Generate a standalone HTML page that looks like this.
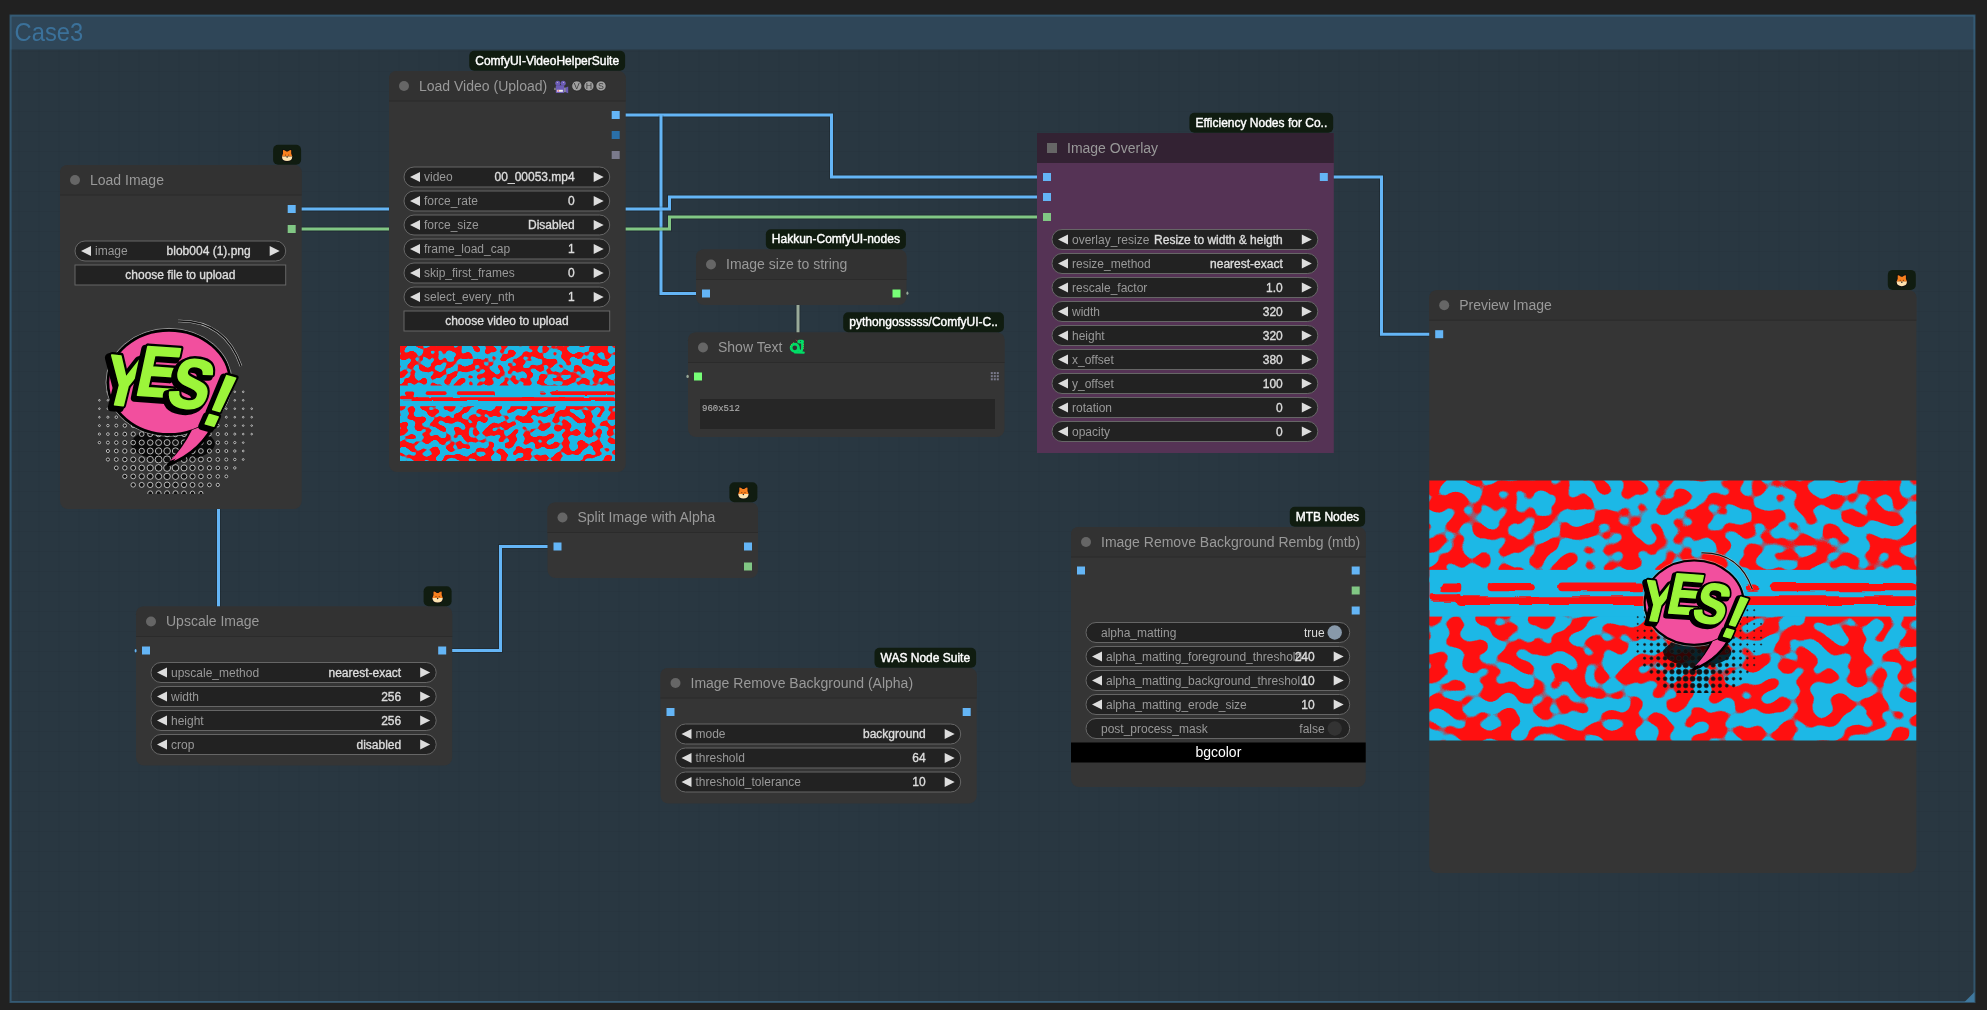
<!DOCTYPE html>
<html><head><meta charset="utf-8"><style>
html,body{margin:0;padding:0;background:#212121;width:1987px;height:1010px;overflow:hidden}
svg{display:block;font-family:"Liberation Sans", sans-serif;will-change:transform}
</style></head><body>
<svg width="1987" height="1010" viewBox="0 0 1987 1010">
<defs>
<pattern id="grid" x="18.5" y="11" width="20" height="20" patternUnits="userSpaceOnUse">
<rect x="0" y="0" width="20" height="1" fill="rgba(0,0,0,0.03)"/>
<rect x="0" y="0" width="1" height="20" fill="rgba(0,0,0,0.03)"/>
</pattern>
<filter id="blob" x="0" y="0" width="1" height="1" color-interpolation-filters="sRGB">
<feTurbulence type="fractalNoise" baseFrequency="0.029 0.035" numOctaves="1" seed="11"/>
<feComponentTransfer><feFuncR type="linear" slope="20" intercept="-9.5"/></feComponentTransfer>
<feColorMatrix type="matrix" values="0.890 0 0 0 0.110  -0.659 0 0 0 0.722  -0.839 0 0 0 0.902  0 0 0 0 1"/>
</filter>
<filter id="wave" x="-5%" y="-50%" width="110%" height="200%" color-interpolation-filters="sRGB">
<feTurbulence type="fractalNoise" baseFrequency="0.015 0.08" numOctaves="1" seed="3" result="n"/>
<feDisplacementMap in="SourceGraphic" in2="n" scale="12" xChannelSelector="R" yChannelSelector="G"/>
</filter>
<symbol id="blobimg" viewBox="0 0 960 512" preserveAspectRatio="none">
<rect x="0" y="0" width="960" height="512" filter="url(#blob)"/>
<rect x="0" y="176" width="960" height="92" fill="#1cb8e6"/>
<g fill="#ff1010" filter="url(#wave)">
<rect x="22" y="203" width="41" height="15" rx="7"/><rect x="115" y="202" width="93" height="16" rx="8"/><rect x="254" y="201" width="170" height="17" rx="8"/><rect x="626" y="203" width="25" height="14" rx="7"/><rect x="673" y="202" width="287" height="16" rx="8"/>
<rect x="52" y="228" width="908" height="17" rx="8"/><rect x="0" y="222" width="62" height="15" rx="7"/>
</g>
</symbol>
<symbol id="fox" viewBox="0 0 14 14" width="14" height="14">
<path d="M1.5,8 L2.6,4.8 L2.6,1 Q4.4,0.4 6.3,2.4 L7.7,2.4 Q9.6,0.4 11.4,1 L11.4,4.8 L12.5,8 Q12.2,12.8 7,12.9 Q1.8,12.8 1.5,8 Z" fill="#111" stroke="#111" stroke-width="1.0" stroke-linejoin="round"/>
<path d="M1.8,7.9 L2.9,4.8 L2.9,1.5 Q4.4,1 6.2,2.9 L7.8,2.9 Q9.6,1 11.1,1.5 L11.1,4.8 L12.2,7.9 Z" fill="#f7801f"/>
<path d="M1.8,7.7 L12.2,7.7 Q11.9,12.3 7,12.4 Q2.1,12.3 1.8,7.7 Z" fill="#fde3b0"/>
<circle cx="5.4" cy="6.4" r="0.6" fill="#7a3c10"/><circle cx="8.6" cy="6.4" r="0.6" fill="#7a3c10"/>
<circle cx="7" cy="8.3" r="0.75" fill="#222"/>
</symbol>
<symbol id="yes" viewBox="0 0 200 200">
<ellipse cx="93" cy="150" rx="42" ry="17" fill="#000" stroke="none" opacity="0.8"/>
<g fill="#111" stroke-width="0.8"><circle cx="27.9" cy="97.8" r="0.80"/><circle cx="36.3" cy="97.8" r="0.80"/><circle cx="44.8" cy="97.8" r="0.80"/><circle cx="53.2" cy="97.8" r="0.89"/><circle cx="61.7" cy="97.8" r="1.01"/><circle cx="70.2" cy="97.8" r="1.09"/><circle cx="78.6" cy="97.8" r="1.14"/><circle cx="87.1" cy="97.8" r="1.15"/><circle cx="95.5" cy="97.8" r="1.13"/><circle cx="104.0" cy="97.8" r="1.07"/><circle cx="112.5" cy="97.8" r="0.98"/><circle cx="120.9" cy="97.8" r="0.86"/><circle cx="129.4" cy="97.8" r="0.80"/><circle cx="137.8" cy="97.8" r="0.80"/><circle cx="146.3" cy="97.8" r="0.80"/><circle cx="154.8" cy="97.8" r="0.80"/><circle cx="163.2" cy="97.8" r="0.80"/><circle cx="19.4" cy="106.3" r="0.80"/><circle cx="27.9" cy="106.3" r="0.80"/><circle cx="36.3" cy="106.3" r="0.83"/><circle cx="44.8" cy="106.3" r="1.01"/><circle cx="53.2" cy="106.3" r="1.17"/><circle cx="61.7" cy="106.3" r="1.29"/><circle cx="70.2" cy="106.3" r="1.39"/><circle cx="78.6" cy="106.3" r="1.45"/><circle cx="87.1" cy="106.3" r="1.46"/><circle cx="95.5" cy="106.3" r="1.44"/><circle cx="104.0" cy="106.3" r="1.37"/><circle cx="112.5" cy="106.3" r="1.27"/><circle cx="120.9" cy="106.3" r="1.13"/><circle cx="129.4" cy="106.3" r="0.96"/><circle cx="137.8" cy="106.3" r="0.80"/><circle cx="146.3" cy="106.3" r="0.80"/><circle cx="154.8" cy="106.3" r="0.80"/><circle cx="163.2" cy="106.3" r="0.80"/><circle cx="19.4" cy="114.7" r="0.80"/><circle cx="27.9" cy="114.7" r="0.84"/><circle cx="36.3" cy="114.7" r="1.06"/><circle cx="44.8" cy="114.7" r="1.26"/><circle cx="53.2" cy="114.7" r="1.43"/><circle cx="61.7" cy="114.7" r="1.58"/><circle cx="70.2" cy="114.7" r="1.69"/><circle cx="78.6" cy="114.7" r="1.75"/><circle cx="87.1" cy="114.7" r="1.77"/><circle cx="95.5" cy="114.7" r="1.74"/><circle cx="104.0" cy="114.7" r="1.66"/><circle cx="112.5" cy="114.7" r="1.54"/><circle cx="120.9" cy="114.7" r="1.39"/><circle cx="129.4" cy="114.7" r="1.21"/><circle cx="137.8" cy="114.7" r="1.01"/><circle cx="146.3" cy="114.7" r="0.80"/><circle cx="154.8" cy="114.7" r="0.80"/><circle cx="163.2" cy="114.7" r="0.80"/><circle cx="171.7" cy="114.7" r="0.80"/><circle cx="19.4" cy="123.2" r="0.80"/><circle cx="27.9" cy="123.2" r="1.04"/><circle cx="36.3" cy="123.2" r="1.27"/><circle cx="44.8" cy="123.2" r="1.49"/><circle cx="53.2" cy="123.2" r="1.69"/><circle cx="61.7" cy="123.2" r="1.85"/><circle cx="70.2" cy="123.2" r="1.98"/><circle cx="78.6" cy="123.2" r="2.05"/><circle cx="87.1" cy="123.2" r="2.07"/><circle cx="95.5" cy="123.2" r="2.04"/><circle cx="104.0" cy="123.2" r="1.95"/><circle cx="112.5" cy="123.2" r="1.81"/><circle cx="120.9" cy="123.2" r="1.64"/><circle cx="129.4" cy="123.2" r="1.44"/><circle cx="137.8" cy="123.2" r="1.22"/><circle cx="146.3" cy="123.2" r="0.98"/><circle cx="154.8" cy="123.2" r="0.80"/><circle cx="163.2" cy="123.2" r="0.80"/><circle cx="171.7" cy="123.2" r="0.80"/><circle cx="19.4" cy="131.6" r="0.95"/><circle cx="27.9" cy="131.6" r="1.21"/><circle cx="36.3" cy="131.6" r="1.47"/><circle cx="44.8" cy="131.6" r="1.71"/><circle cx="53.2" cy="131.6" r="1.93"/><circle cx="61.7" cy="131.6" r="2.11"/><circle cx="70.2" cy="131.6" r="2.26"/><circle cx="78.6" cy="131.6" r="2.36"/><circle cx="87.1" cy="131.6" r="2.38"/><circle cx="95.5" cy="131.6" r="2.34"/><circle cx="104.0" cy="131.6" r="2.23"/><circle cx="112.5" cy="131.6" r="2.07"/><circle cx="120.9" cy="131.6" r="1.87"/><circle cx="129.4" cy="131.6" r="1.65"/><circle cx="137.8" cy="131.6" r="1.40"/><circle cx="146.3" cy="131.6" r="1.15"/><circle cx="154.8" cy="131.6" r="0.88"/><circle cx="163.2" cy="131.6" r="0.80"/><circle cx="171.7" cy="131.6" r="0.80"/><circle cx="19.4" cy="140.1" r="1.08"/><circle cx="27.9" cy="140.1" r="1.36"/><circle cx="36.3" cy="140.1" r="1.63"/><circle cx="44.8" cy="140.1" r="1.90"/><circle cx="53.2" cy="140.1" r="2.14"/><circle cx="61.7" cy="140.1" r="2.36"/><circle cx="70.2" cy="140.1" r="2.54"/><circle cx="78.6" cy="140.1" r="2.65"/><circle cx="87.1" cy="140.1" r="2.69"/><circle cx="95.5" cy="140.1" r="2.63"/><circle cx="104.0" cy="140.1" r="2.50"/><circle cx="112.5" cy="140.1" r="2.31"/><circle cx="120.9" cy="140.1" r="2.08"/><circle cx="129.4" cy="140.1" r="1.83"/><circle cx="137.8" cy="140.1" r="1.57"/><circle cx="146.3" cy="140.1" r="1.29"/><circle cx="154.8" cy="140.1" r="1.01"/><circle cx="163.2" cy="140.1" r="0.80"/><circle cx="171.7" cy="140.1" r="0.80"/><circle cx="19.4" cy="148.6" r="1.19"/><circle cx="27.9" cy="148.6" r="1.48"/><circle cx="36.3" cy="148.6" r="1.77"/><circle cx="44.8" cy="148.6" r="2.05"/><circle cx="53.2" cy="148.6" r="2.32"/><circle cx="61.7" cy="148.6" r="2.57"/><circle cx="70.2" cy="148.6" r="2.79"/><circle cx="78.6" cy="148.6" r="2.95"/><circle cx="87.1" cy="148.6" r="2.99"/><circle cx="95.5" cy="148.6" r="2.92"/><circle cx="104.0" cy="148.6" r="2.74"/><circle cx="112.5" cy="148.6" r="2.51"/><circle cx="120.9" cy="148.6" r="2.25"/><circle cx="129.4" cy="148.6" r="1.98"/><circle cx="137.8" cy="148.6" r="1.69"/><circle cx="146.3" cy="148.6" r="1.40"/><circle cx="154.8" cy="148.6" r="1.11"/><circle cx="163.2" cy="148.6" r="0.81"/><circle cx="27.9" cy="157.0" r="1.56"/><circle cx="36.3" cy="157.0" r="1.86"/><circle cx="44.8" cy="157.0" r="2.15"/><circle cx="53.2" cy="157.0" r="2.45"/><circle cx="61.7" cy="157.0" r="2.73"/><circle cx="70.2" cy="157.0" r="3.00"/><circle cx="78.6" cy="157.0" r="3.22"/><circle cx="87.1" cy="157.0" r="3.30"/><circle cx="95.5" cy="157.0" r="3.17"/><circle cx="104.0" cy="157.0" r="2.94"/><circle cx="112.5" cy="157.0" r="2.66"/><circle cx="120.9" cy="157.0" r="2.37"/><circle cx="129.4" cy="157.0" r="2.08"/><circle cx="137.8" cy="157.0" r="1.78"/><circle cx="146.3" cy="157.0" r="1.48"/><circle cx="154.8" cy="157.0" r="1.18"/><circle cx="163.2" cy="157.0" r="0.87"/><circle cx="27.9" cy="165.5" r="1.59"/><circle cx="36.3" cy="165.5" r="1.90"/><circle cx="44.8" cy="165.5" r="2.20"/><circle cx="53.2" cy="165.5" r="2.51"/><circle cx="61.7" cy="165.5" r="2.81"/><circle cx="70.2" cy="165.5" r="3.12"/><circle cx="78.6" cy="165.5" r="3.42"/><circle cx="87.1" cy="165.5" r="3.60"/><circle cx="95.5" cy="165.5" r="3.34"/><circle cx="104.0" cy="165.5" r="3.04"/><circle cx="112.5" cy="165.5" r="2.74"/><circle cx="120.9" cy="165.5" r="2.43"/><circle cx="129.4" cy="165.5" r="2.12"/><circle cx="137.8" cy="165.5" r="1.82"/><circle cx="146.3" cy="165.5" r="1.51"/><circle cx="154.8" cy="165.5" r="1.21"/><circle cx="163.2" cy="165.5" r="0.90"/><circle cx="36.3" cy="173.9" r="1.89"/><circle cx="44.8" cy="173.9" r="2.19"/><circle cx="53.2" cy="173.9" r="2.49"/><circle cx="61.7" cy="173.9" r="2.79"/><circle cx="70.2" cy="173.9" r="3.09"/><circle cx="78.6" cy="173.9" r="3.36"/><circle cx="87.1" cy="173.9" r="3.48"/><circle cx="95.5" cy="173.9" r="3.29"/><circle cx="104.0" cy="173.9" r="3.01"/><circle cx="112.5" cy="173.9" r="2.72"/><circle cx="120.9" cy="173.9" r="2.42"/><circle cx="129.4" cy="173.9" r="2.11"/><circle cx="137.8" cy="173.9" r="1.81"/><circle cx="146.3" cy="173.9" r="1.50"/><circle cx="154.8" cy="173.9" r="1.20"/><circle cx="44.8" cy="182.4" r="2.12"/><circle cx="53.2" cy="182.4" r="2.40"/><circle cx="61.7" cy="182.4" r="2.68"/><circle cx="70.2" cy="182.4" r="2.92"/><circle cx="78.6" cy="182.4" r="3.11"/><circle cx="87.1" cy="182.4" r="3.18"/><circle cx="95.5" cy="182.4" r="3.07"/><circle cx="104.0" cy="182.4" r="2.86"/><circle cx="112.5" cy="182.4" r="2.61"/><circle cx="120.9" cy="182.4" r="2.33"/><circle cx="129.4" cy="182.4" r="2.04"/><circle cx="137.8" cy="182.4" r="1.75"/><circle cx="146.3" cy="182.4" r="1.45"/><circle cx="53.2" cy="190.9" r="2.25"/><circle cx="61.7" cy="190.9" r="2.49"/><circle cx="70.2" cy="190.9" r="2.69"/><circle cx="78.6" cy="190.9" r="2.83"/><circle cx="87.1" cy="190.9" r="2.87"/><circle cx="95.5" cy="190.9" r="2.80"/><circle cx="104.0" cy="190.9" r="2.65"/><circle cx="112.5" cy="190.9" r="2.43"/><circle cx="120.9" cy="190.9" r="2.19"/><circle cx="129.4" cy="190.9" r="1.92"/><circle cx="137.8" cy="190.9" r="1.65"/><circle cx="70.2" cy="199.3" r="2.43"/><circle cx="78.6" cy="199.3" r="2.53"/><circle cx="87.1" cy="199.3" r="2.56"/><circle cx="95.5" cy="199.3" r="2.51"/><circle cx="104.0" cy="199.3" r="2.39"/><circle cx="112.5" cy="199.3" r="2.21"/><circle cx="120.9" cy="199.3" r="2.00"/></g>
<ellipse cx="89" cy="88.4" rx="63" ry="54" fill="none" stroke="#bbb" stroke-width="0.7"/>
<path d="M112,134 Q103,156 88,171 Q122,158 136,126 Z" fill="#f24f9e" stroke="#000" stroke-width="3" stroke-linejoin="round"/>
<ellipse cx="89" cy="88.4" rx="61" ry="52" fill="#f24f9e" stroke="#000" stroke-width="2.6"/>
<path d="M112,136 Q103,154 90,167 Q120,156 133,128 Z" fill="#f24f9e" stroke="none"/>
<path d="M98,27 Q145,26 161,72" fill="none" stroke="#bbb" stroke-width="2.6"/>
<path d="M98,27 Q145,26 161,72" fill="none" stroke="#111" stroke-width="1.5"/>
<g transform="translate(45 86) rotate(6) skewX(-8) scale(0.92 1.08)"><text x="-2.5" y="26.128" font-size="66" font-weight="bold" text-anchor="middle" fill="#000" stroke="#000" stroke-width="8" stroke-linejoin="round">Y</text><text x="0" y="23.628" font-size="66" font-weight="bold" text-anchor="middle" fill="#000" stroke="#000" stroke-width="6" stroke-linejoin="round">Y</text><text x="0" y="23.628" font-size="66" font-weight="bold" text-anchor="middle" fill="#9cf53a" stroke="#9cf53a" stroke-width="1.6" stroke-linejoin="round">Y</text></g>
<g transform="translate(79 77) rotate(4) skewX(-8) scale(0.92 1.08)"><text x="-2.5" y="26.128" font-size="66" font-weight="bold" text-anchor="middle" fill="#000" stroke="#000" stroke-width="8" stroke-linejoin="round">E</text><text x="0" y="23.628" font-size="66" font-weight="bold" text-anchor="middle" fill="#000" stroke="#000" stroke-width="6" stroke-linejoin="round">E</text><text x="0" y="23.628" font-size="66" font-weight="bold" text-anchor="middle" fill="#9cf53a" stroke="#9cf53a" stroke-width="1.6" stroke-linejoin="round">E</text></g>
<g transform="translate(112 89) rotate(10) skewX(-8) scale(0.92 1.08)"><text x="-2.5" y="26.128" font-size="66" font-weight="bold" text-anchor="middle" fill="#000" stroke="#000" stroke-width="8" stroke-linejoin="round">S</text><text x="0" y="23.628" font-size="66" font-weight="bold" text-anchor="middle" fill="#000" stroke="#000" stroke-width="6" stroke-linejoin="round">S</text><text x="0" y="23.628" font-size="66" font-weight="bold" text-anchor="middle" fill="#9cf53a" stroke="#9cf53a" stroke-width="1.6" stroke-linejoin="round">S</text></g>
<g transform="translate(141 106) rotate(16) skewX(-8) scale(0.92 1.08)"><text x="-2.5" y="27.56" font-size="70" font-weight="bold" text-anchor="middle" fill="#000" stroke="#000" stroke-width="8" stroke-linejoin="round">!</text><text x="0" y="25.06" font-size="70" font-weight="bold" text-anchor="middle" fill="#000" stroke="#000" stroke-width="6" stroke-linejoin="round">!</text><text x="0" y="25.06" font-size="70" font-weight="bold" text-anchor="middle" fill="#9cf53a" stroke="#9cf53a" stroke-width="1.6" stroke-linejoin="round">!</text></g>
</symbol>
</defs>

<rect x="10.5" y="15.5" width="1964" height="986.5" fill="rgb(41,55,65)"/>
<rect x="10.5" y="15.5" width="1964" height="986.5" fill="url(#grid)"/>
<rect x="10.5" y="15.5" width="1964" height="34" fill="rgb(47,70,88)"/>
<rect x="10.5" y="15.5" width="1964" height="986.5" fill="none" stroke="#3f789e" stroke-opacity="0.55" stroke-width="2"/>
<path d="M1974.5,1002 L1964.5,1002 L1974.5,992 Z" fill="#3f789e"/>
<text x="0" y="0" font-size="24" fill="#3b719a" transform="translate(14.6 40.8) scale(0.99 1.05)">Case3</text>
<path d="M616,115 L831.5,115 L831.5,177 L1043,177" fill="none" stroke="rgba(0,0,0,0.18)" stroke-width="5" stroke-linejoin="miter"/>
<path d="M616,115 L831.5,115 L831.5,177 L1043,177" fill="none" stroke="#64B5F6" stroke-width="3" stroke-linejoin="miter"/>
<path d="M661,115 L661,293.5 L702,293.5" fill="none" stroke="rgba(0,0,0,0.18)" stroke-width="5" stroke-linejoin="miter"/>
<path d="M661,115 L661,293.5 L702,293.5" fill="none" stroke="#64B5F6" stroke-width="3" stroke-linejoin="miter"/>
<path d="M292,209 L669.5,209 L669.5,197 L1043,197" fill="none" stroke="rgba(0,0,0,0.18)" stroke-width="5" stroke-linejoin="miter"/>
<path d="M292,209 L669.5,209 L669.5,197 L1043,197" fill="none" stroke="#64B5F6" stroke-width="3" stroke-linejoin="miter"/>
<path d="M292,229 L669.5,229 L669.5,217 L1043,217" fill="none" stroke="rgba(0,0,0,0.18)" stroke-width="5" stroke-linejoin="miter"/>
<path d="M292,229 L669.5,229 L669.5,217 L1043,217" fill="none" stroke="#81C784" stroke-width="3" stroke-linejoin="miter"/>
<path d="M1324,177 L1381.5,177 L1381.5,334.2 L1435,334.2" fill="none" stroke="rgba(0,0,0,0.18)" stroke-width="5" stroke-linejoin="miter"/>
<path d="M1324,177 L1381.5,177 L1381.5,334.2 L1435,334.2" fill="none" stroke="#64B5F6" stroke-width="3" stroke-linejoin="miter"/>
<path d="M218.5,500 L218.5,615" fill="none" stroke="rgba(0,0,0,0.18)" stroke-width="5" stroke-linejoin="miter"/>
<path d="M218.5,500 L218.5,615" fill="none" stroke="#64B5F6" stroke-width="3" stroke-linejoin="miter"/>
<path d="M442,650.5 L500.5,650.5 L500.5,546.5 L557,546.5" fill="none" stroke="rgba(0,0,0,0.18)" stroke-width="5" stroke-linejoin="miter"/>
<path d="M442,650.5 L500.5,650.5 L500.5,546.5 L557,546.5" fill="none" stroke="#64B5F6" stroke-width="3" stroke-linejoin="miter"/>
<path d="M798,300 L798,340" fill="none" stroke="rgba(0,0,0,0.18)" stroke-width="5" stroke-linejoin="miter"/>
<path d="M798,300 L798,340" fill="none" stroke="#9a9" stroke-width="3" stroke-linejoin="miter"/>
<g>
<rect x="60" y="165" width="241.7" height="344" rx="8" fill="#353535"/>
<path d="M60,195 V173 Q60,165 68,165 H293.7 Q301.7,165 301.7,173 V195 Z" fill="#323232"/>
<rect x="60" y="194.5" width="241.7" height="1" fill="#2b2b2b"/>
<circle cx="75" cy="180" r="5" fill="#666"/>
<text x="90" y="184.6" font-size="14" fill="#999">Load Image</text>

</g>
<rect x="287.7" y="205" width="8" height="8" fill="#64B5F6"/>
<rect x="287.7" y="225" width="8" height="8" fill="#81C784"/>
<rect x="75" y="241" width="210.7" height="20" rx="10" fill="#222" stroke="#666" stroke-width="1"/>
<path d="M91,246 L81,251 L91,256 Z" fill="#ddd"/>
<path d="M269.7,246 L279.7,251 L269.7,256 Z" fill="#ddd"/>
<text x="95" y="255" font-size="12" fill="#999">image</text>
<text x="250.7" y="255" font-size="12" fill="#ddd" stroke="#ddd" stroke-width="0.35" text-anchor="end">blob004 (1).png</text>
<rect x="75" y="265" width="210.7" height="20" fill="#222" stroke="#666" stroke-width="1"/>
<text x="180.35" y="279" font-size="12" fill="#ddd" stroke="#ddd" stroke-width="0.35" text-anchor="middle">choose file to upload</text>
<use href="#yes" x="80" y="294" width="200" height="200" stroke="#ddd"/>
<rect x="273.09999999999997" y="144.7" width="28" height="20" rx="5" fill="#101c10"/>
<use href="#fox" x="280.09999999999997" y="148.7"/>
<g>
<rect x="389" y="71" width="236.7" height="401" rx="8" fill="#353535"/>
<path d="M389,101 V79 Q389,71 397,71 H617.7 Q625.7,71 625.7,79 V101 Z" fill="#323232"/>
<rect x="389" y="100.5" width="236.7" height="1" fill="#2b2b2b"/>
<circle cx="404" cy="86" r="5" fill="#666"/>
<text x="419" y="90.6" font-size="14" fill="#999">Load Video (Upload)</text>
<g fill="#6c5cb6"><circle cx="557.8" cy="83.3" r="2.5"/><circle cx="563.2" cy="83.3" r="2.5"/><rect x="555.8" y="85.2" width="8.4" height="7.9" rx="0.8"/><path d="M564,88.2 L568.2,86.4 L568.2,93.2 L564,91.6 Z"/></g><rect x="564" y="87.6" width="1.6" height="4.6" fill="#8a8a98"/><rect x="554" y="87.8" width="2" height="2.2" fill="#777"/><rect x="556.9" y="89.8" width="6" height="2" fill="#eee"/><rect x="557.7" y="89.8" width="0.9" height="2" fill="#e04060"/><circle cx="557.3" cy="82.6" r="0.5" fill="#ccc"/><circle cx="563.6" cy="82.6" r="0.5" fill="#ccc"/><circle cx="576.8" cy="86" r="5.1" fill="#a0a0a0" stroke="#222" stroke-width="0.7"/><text x="576.8" y="89.2" font-size="8.8" text-anchor="middle" fill="#3a3a3a">V</text><circle cx="588.9" cy="86" r="5.1" fill="#a0a0a0" stroke="#222" stroke-width="0.7"/><text x="588.9" y="89.2" font-size="8.8" text-anchor="middle" fill="#3a3a3a">H</text><circle cx="601" cy="86" r="5.1" fill="#a0a0a0" stroke="#222" stroke-width="0.7"/><text x="601" y="89.2" font-size="8.8" text-anchor="middle" fill="#3a3a3a">S</text>
</g>
<rect x="611.7" y="111" width="8" height="8" fill="#64B5F6"/>
<rect x="611.7" y="131" width="8" height="8" fill="#2a6fa8"/>
<rect x="611.7" y="151" width="8" height="8" fill="#7a7a8c"/>
<rect x="404" y="167" width="205.7" height="20" rx="10" fill="#222" stroke="#666" stroke-width="1"/>
<path d="M420,172 L410,177 L420,182 Z" fill="#ddd"/>
<path d="M593.7,172 L603.7,177 L593.7,182 Z" fill="#ddd"/>
<text x="424" y="181" font-size="12" fill="#999">video</text>
<text x="574.7" y="181" font-size="12" fill="#ddd" stroke="#ddd" stroke-width="0.35" text-anchor="end">00_00053.mp4</text>
<rect x="404" y="191" width="205.7" height="20" rx="10" fill="#222" stroke="#666" stroke-width="1"/>
<path d="M420,196 L410,201 L420,206 Z" fill="#ddd"/>
<path d="M593.7,196 L603.7,201 L593.7,206 Z" fill="#ddd"/>
<text x="424" y="205" font-size="12" fill="#999">force_rate</text>
<text x="574.7" y="205" font-size="12" fill="#ddd" stroke="#ddd" stroke-width="0.35" text-anchor="end">0</text>
<rect x="404" y="215" width="205.7" height="20" rx="10" fill="#222" stroke="#666" stroke-width="1"/>
<path d="M420,220 L410,225 L420,230 Z" fill="#ddd"/>
<path d="M593.7,220 L603.7,225 L593.7,230 Z" fill="#ddd"/>
<text x="424" y="229" font-size="12" fill="#999">force_size</text>
<text x="574.7" y="229" font-size="12" fill="#ddd" stroke="#ddd" stroke-width="0.35" text-anchor="end">Disabled</text>
<rect x="404" y="239" width="205.7" height="20" rx="10" fill="#222" stroke="#666" stroke-width="1"/>
<path d="M420,244 L410,249 L420,254 Z" fill="#ddd"/>
<path d="M593.7,244 L603.7,249 L593.7,254 Z" fill="#ddd"/>
<text x="424" y="253" font-size="12" fill="#999">frame_load_cap</text>
<text x="574.7" y="253" font-size="12" fill="#ddd" stroke="#ddd" stroke-width="0.35" text-anchor="end">1</text>
<rect x="404" y="263" width="205.7" height="20" rx="10" fill="#222" stroke="#666" stroke-width="1"/>
<path d="M420,268 L410,273 L420,278 Z" fill="#ddd"/>
<path d="M593.7,268 L603.7,273 L593.7,278 Z" fill="#ddd"/>
<text x="424" y="277" font-size="12" fill="#999">skip_first_frames</text>
<text x="574.7" y="277" font-size="12" fill="#ddd" stroke="#ddd" stroke-width="0.35" text-anchor="end">0</text>
<rect x="404" y="287" width="205.7" height="20" rx="10" fill="#222" stroke="#666" stroke-width="1"/>
<path d="M420,292 L410,297 L420,302 Z" fill="#ddd"/>
<path d="M593.7,292 L603.7,297 L593.7,302 Z" fill="#ddd"/>
<text x="424" y="301" font-size="12" fill="#999">select_every_nth</text>
<text x="574.7" y="301" font-size="12" fill="#ddd" stroke="#ddd" stroke-width="0.35" text-anchor="end">1</text>
<rect x="404" y="311" width="205.7" height="20" fill="#222" stroke="#666" stroke-width="1"/>
<text x="506.85" y="325" font-size="12" fill="#ddd" stroke="#ddd" stroke-width="0.35" text-anchor="middle">choose video to upload</text>
<use href="#blobimg" x="400" y="346" width="215" height="115"/>
<rect x="469.25625" y="50.7" width="155.84375" height="20" rx="5" fill="#101c10"/>
<text x="475.25625" y="64.7" font-size="12" fill="#fff" stroke="#fff" stroke-width="0.4">ComfyUI-VideoHelperSuite</text>
<g>
<rect x="1037" y="133" width="296.8" height="320" rx="0" fill="#553355"/>
<rect x="1037" y="133" width="296.8" height="30" fill="#332233"/>
<rect x="1047" y="143" width="10" height="10" fill="#666"/>
<text x="1067" y="152.6" font-size="14" fill="#999">Image Overlay</text>

</g>
<rect x="1043" y="173" width="8" height="8" fill="#64B5F6"/>
<rect x="1043" y="193" width="8" height="8" fill="#64B5F6"/>
<rect x="1043" y="213" width="8" height="8" fill="#81C784"/>
<rect x="1319.8" y="173" width="8" height="8" fill="#64B5F6"/>
<rect x="1052" y="229.5" width="265.8" height="20" rx="10" fill="#222" stroke="#666" stroke-width="1"/>
<path d="M1068,234.5 L1058,239.5 L1068,244.5 Z" fill="#ddd"/>
<path d="M1301.8,234.5 L1311.8,239.5 L1301.8,244.5 Z" fill="#ddd"/>
<text x="1072" y="243.5" font-size="12" fill="#999">overlay_resize</text>
<text x="1282.8" y="243.5" font-size="12" fill="#ddd" stroke="#ddd" stroke-width="0.35" text-anchor="end">Resize to width &amp; heigth</text>
<rect x="1052" y="253.5" width="265.8" height="20" rx="10" fill="#222" stroke="#666" stroke-width="1"/>
<path d="M1068,258.5 L1058,263.5 L1068,268.5 Z" fill="#ddd"/>
<path d="M1301.8,258.5 L1311.8,263.5 L1301.8,268.5 Z" fill="#ddd"/>
<text x="1072" y="267.5" font-size="12" fill="#999">resize_method</text>
<text x="1282.8" y="267.5" font-size="12" fill="#ddd" stroke="#ddd" stroke-width="0.35" text-anchor="end">nearest-exact</text>
<rect x="1052" y="277.5" width="265.8" height="20" rx="10" fill="#222" stroke="#666" stroke-width="1"/>
<path d="M1068,282.5 L1058,287.5 L1068,292.5 Z" fill="#ddd"/>
<path d="M1301.8,282.5 L1311.8,287.5 L1301.8,292.5 Z" fill="#ddd"/>
<text x="1072" y="291.5" font-size="12" fill="#999">rescale_factor</text>
<text x="1282.8" y="291.5" font-size="12" fill="#ddd" stroke="#ddd" stroke-width="0.35" text-anchor="end">1.0</text>
<rect x="1052" y="301.5" width="265.8" height="20" rx="10" fill="#222" stroke="#666" stroke-width="1"/>
<path d="M1068,306.5 L1058,311.5 L1068,316.5 Z" fill="#ddd"/>
<path d="M1301.8,306.5 L1311.8,311.5 L1301.8,316.5 Z" fill="#ddd"/>
<text x="1072" y="315.5" font-size="12" fill="#999">width</text>
<text x="1282.8" y="315.5" font-size="12" fill="#ddd" stroke="#ddd" stroke-width="0.35" text-anchor="end">320</text>
<rect x="1052" y="325.5" width="265.8" height="20" rx="10" fill="#222" stroke="#666" stroke-width="1"/>
<path d="M1068,330.5 L1058,335.5 L1068,340.5 Z" fill="#ddd"/>
<path d="M1301.8,330.5 L1311.8,335.5 L1301.8,340.5 Z" fill="#ddd"/>
<text x="1072" y="339.5" font-size="12" fill="#999">height</text>
<text x="1282.8" y="339.5" font-size="12" fill="#ddd" stroke="#ddd" stroke-width="0.35" text-anchor="end">320</text>
<rect x="1052" y="349.5" width="265.8" height="20" rx="10" fill="#222" stroke="#666" stroke-width="1"/>
<path d="M1068,354.5 L1058,359.5 L1068,364.5 Z" fill="#ddd"/>
<path d="M1301.8,354.5 L1311.8,359.5 L1301.8,364.5 Z" fill="#ddd"/>
<text x="1072" y="363.5" font-size="12" fill="#999">x_offset</text>
<text x="1282.8" y="363.5" font-size="12" fill="#ddd" stroke="#ddd" stroke-width="0.35" text-anchor="end">380</text>
<rect x="1052" y="373.5" width="265.8" height="20" rx="10" fill="#222" stroke="#666" stroke-width="1"/>
<path d="M1068,378.5 L1058,383.5 L1068,388.5 Z" fill="#ddd"/>
<path d="M1301.8,378.5 L1311.8,383.5 L1301.8,388.5 Z" fill="#ddd"/>
<text x="1072" y="387.5" font-size="12" fill="#999">y_offset</text>
<text x="1282.8" y="387.5" font-size="12" fill="#ddd" stroke="#ddd" stroke-width="0.35" text-anchor="end">100</text>
<rect x="1052" y="397.5" width="265.8" height="20" rx="10" fill="#222" stroke="#666" stroke-width="1"/>
<path d="M1068,402.5 L1058,407.5 L1068,412.5 Z" fill="#ddd"/>
<path d="M1301.8,402.5 L1311.8,407.5 L1301.8,412.5 Z" fill="#ddd"/>
<text x="1072" y="411.5" font-size="12" fill="#999">rotation</text>
<text x="1282.8" y="411.5" font-size="12" fill="#ddd" stroke="#ddd" stroke-width="0.35" text-anchor="end">0</text>
<rect x="1052" y="421.5" width="265.8" height="20" rx="10" fill="#222" stroke="#666" stroke-width="1"/>
<path d="M1068,426.5 L1058,431.5 L1068,436.5 Z" fill="#ddd"/>
<path d="M1301.8,426.5 L1311.8,431.5 L1301.8,436.5 Z" fill="#ddd"/>
<text x="1072" y="435.5" font-size="12" fill="#999">opacity</text>
<text x="1282.8" y="435.5" font-size="12" fill="#ddd" stroke="#ddd" stroke-width="0.35" text-anchor="end">0</text>
<rect x="1189.403125" y="112.69999999999999" width="143.796875" height="20" rx="5" fill="#101c10"/>
<text x="1195.403125" y="126.69999999999999" font-size="12" fill="#fff" stroke="#fff" stroke-width="0.4">Efficiency Nodes for Co..</text>
<g>
<rect x="696" y="249.5" width="210.5" height="55.5" rx="8" fill="#353535"/>
<path d="M696,279.5 V257.5 Q696,249.5 704,249.5 H898.5 Q906.5,249.5 906.5,257.5 V279.5 Z" fill="#323232"/>
<rect x="696" y="279.0" width="210.5" height="1" fill="#2b2b2b"/>
<circle cx="711" cy="264.5" r="5" fill="#666"/>
<text x="726" y="269.1" font-size="14" fill="#999">Image size to string</text>

</g>
<rect x="702" y="289.5" width="8" height="8" fill="#64B5F6"/>
<rect x="892.5" y="289.5" width="8" height="8" fill="#7f7"/>
<rect x="765.853125" y="229.2" width="140.046875" height="20" rx="5" fill="#101c10"/>
<text x="771.853125" y="243.2" font-size="12" fill="#fff" stroke="#fff" stroke-width="0.4">Hakkun-ComfyUI-nodes</text>
<g>
<rect x="688" y="332.5" width="316.5" height="104.5" rx="8" fill="#353535"/>
<path d="M688,362.5 V340.5 Q688,332.5 696,332.5 H996.5 Q1004.5,332.5 1004.5,340.5 V362.5 Z" fill="#323232"/>
<rect x="688" y="362.0" width="316.5" height="1" fill="#2b2b2b"/>
<circle cx="703" cy="347.5" r="5" fill="#666"/>
<text x="718" y="352.1" font-size="14" fill="#999">Show Text</text>
<g><circle cx="794.8" cy="347.8" r="3.7" fill="none" stroke="#00dd66" stroke-width="2.7"/><path d="M795,352.2 L803.6,352.6" stroke="#00dd66" stroke-width="2.4" stroke-linecap="round"/><path d="M798.4,348.6 Q799.2,351.6 801.2,351 Q802.6,350.4 802.4,343" fill="none" stroke="#00dd66" stroke-width="2.6"/><rect x="797.2" y="339.8" width="6.8" height="3.8" rx="1.8" fill="#00dd66"/><circle cx="800.5" cy="341.5" r="0.55" fill="#064"/><path d="M797.4,341.2 L795.8,339.8" stroke="#c03030" stroke-width="0.9"/><g fill="#c8c830"><circle cx="790.6" cy="346.6" r="0.45"/><circle cx="791.6" cy="344.2" r="0.45"/><circle cx="793.6" cy="342.6" r="0.45"/><circle cx="803.6" cy="344.4" r="0.45"/><circle cx="803.6" cy="346.4" r="0.45"/><circle cx="803.6" cy="348.4" r="0.45"/></g></g>
</g>
<rect x="694" y="372.5" width="8" height="8" fill="#7f7"/>
<rect x="990.8" y="372.1" width="2" height="2" fill="#7b7b8c"/><rect x="990.8" y="375.2" width="2" height="2" fill="#7b7b8c"/><rect x="990.8" y="378.3" width="2" height="2" fill="#7b7b8c"/><rect x="993.8" y="372.1" width="2" height="2" fill="#7b7b8c"/><rect x="993.8" y="375.2" width="2" height="2" fill="#7b7b8c"/><rect x="993.8" y="378.3" width="2" height="2" fill="#7b7b8c"/><rect x="996.8" y="372.1" width="2" height="2" fill="#7b7b8c"/><rect x="996.8" y="375.2" width="2" height="2" fill="#7b7b8c"/><rect x="996.8" y="378.3" width="2" height="2" fill="#7b7b8c"/>
<rect x="700" y="399" width="295" height="30" fill="#262626"/>
<text x="702" y="410.8" font-size="9" font-family="Liberation Mono, monospace" fill="#aaa" stroke="#aaa" stroke-width="0.15">960x512</text>
<rect x="843.2125" y="312.2" width="160.6875" height="20" rx="5" fill="#101c10"/>
<text x="849.2125" y="326.2" font-size="12" fill="#fff" stroke="#fff" stroke-width="0.4">pythongosssss/ComfyUI-C..</text>
<g>
<rect x="547.5" y="502.5" width="210.5" height="75.5" rx="8" fill="#353535"/>
<path d="M547.5,532.5 V510.5 Q547.5,502.5 555.5,502.5 H750.0 Q758.0,502.5 758.0,510.5 V532.5 Z" fill="#323232"/>
<rect x="547.5" y="532.0" width="210.5" height="1" fill="#2b2b2b"/>
<circle cx="562.5" cy="517.5" r="5" fill="#666"/>
<text x="577.5" y="522.1" font-size="14" fill="#999">Split Image with Alpha</text>

</g>
<rect x="553.5" y="542.5" width="8" height="8" fill="#64B5F6"/>
<rect x="744.0" y="542.5" width="8" height="8" fill="#64B5F6"/>
<rect x="744.0" y="562.5" width="8" height="8" fill="#81C784"/>
<rect x="729.4" y="482.2" width="28" height="20" rx="5" fill="#101c10"/>
<use href="#fox" x="736.4" y="486.2"/>
<g>
<rect x="136" y="606.5" width="316.2" height="159.0" rx="8" fill="#353535"/>
<path d="M136,636.5 V614.5 Q136,606.5 144,606.5 H444.2 Q452.2,606.5 452.2,614.5 V636.5 Z" fill="#323232"/>
<rect x="136" y="636.0" width="316.2" height="1" fill="#2b2b2b"/>
<circle cx="151" cy="621.5" r="5" fill="#666"/>
<text x="166" y="626.1" font-size="14" fill="#999">Upscale Image</text>

</g>
<rect x="142" y="646.5" width="8" height="8" fill="#64B5F6"/>
<rect x="438.2" y="646.5" width="8" height="8" fill="#64B5F6"/>
<rect x="151" y="662.5" width="285.2" height="20" rx="10" fill="#222" stroke="#666" stroke-width="1"/>
<path d="M167,667.5 L157,672.5 L167,677.5 Z" fill="#ddd"/>
<path d="M420.2,667.5 L430.2,672.5 L420.2,677.5 Z" fill="#ddd"/>
<text x="171" y="676.5" font-size="12" fill="#999">upscale_method</text>
<text x="401.2" y="676.5" font-size="12" fill="#ddd" stroke="#ddd" stroke-width="0.35" text-anchor="end">nearest-exact</text>
<rect x="151" y="686.5" width="285.2" height="20" rx="10" fill="#222" stroke="#666" stroke-width="1"/>
<path d="M167,691.5 L157,696.5 L167,701.5 Z" fill="#ddd"/>
<path d="M420.2,691.5 L430.2,696.5 L420.2,701.5 Z" fill="#ddd"/>
<text x="171" y="700.5" font-size="12" fill="#999">width</text>
<text x="401.2" y="700.5" font-size="12" fill="#ddd" stroke="#ddd" stroke-width="0.35" text-anchor="end">256</text>
<rect x="151" y="710.5" width="285.2" height="20" rx="10" fill="#222" stroke="#666" stroke-width="1"/>
<path d="M167,715.5 L157,720.5 L167,725.5 Z" fill="#ddd"/>
<path d="M420.2,715.5 L430.2,720.5 L420.2,725.5 Z" fill="#ddd"/>
<text x="171" y="724.5" font-size="12" fill="#999">height</text>
<text x="401.2" y="724.5" font-size="12" fill="#ddd" stroke="#ddd" stroke-width="0.35" text-anchor="end">256</text>
<rect x="151" y="734.5" width="285.2" height="20" rx="10" fill="#222" stroke="#666" stroke-width="1"/>
<path d="M167,739.5 L157,744.5 L167,749.5 Z" fill="#ddd"/>
<path d="M420.2,739.5 L430.2,744.5 L420.2,749.5 Z" fill="#ddd"/>
<text x="171" y="748.5" font-size="12" fill="#999">crop</text>
<text x="401.2" y="748.5" font-size="12" fill="#ddd" stroke="#ddd" stroke-width="0.35" text-anchor="end">disabled</text>
<rect x="423.59999999999997" y="586.2" width="28" height="20" rx="5" fill="#101c10"/>
<use href="#fox" x="430.59999999999997" y="590.2"/>
<g>
<rect x="660.5" y="668" width="316.2" height="135.5" rx="8" fill="#353535"/>
<path d="M660.5,698 V676 Q660.5,668 668.5,668 H968.7 Q976.7,668 976.7,676 V698 Z" fill="#323232"/>
<rect x="660.5" y="697.5" width="316.2" height="1" fill="#2b2b2b"/>
<circle cx="675.5" cy="683" r="5" fill="#666"/>
<text x="690.5" y="687.6" font-size="14" fill="#999">Image Remove Background (Alpha)</text>

</g>
<rect x="666.5" y="708" width="8" height="8" fill="#64B5F6"/>
<rect x="962.7" y="708" width="8" height="8" fill="#64B5F6"/>
<rect x="675.5" y="724" width="285.2" height="20" rx="10" fill="#222" stroke="#666" stroke-width="1"/>
<path d="M691.5,729 L681.5,734 L691.5,739 Z" fill="#ddd"/>
<path d="M944.7,729 L954.7,734 L944.7,739 Z" fill="#ddd"/>
<text x="695.5" y="738" font-size="12" fill="#999">mode</text>
<text x="925.7" y="738" font-size="12" fill="#ddd" stroke="#ddd" stroke-width="0.35" text-anchor="end">background</text>
<rect x="675.5" y="748" width="285.2" height="20" rx="10" fill="#222" stroke="#666" stroke-width="1"/>
<path d="M691.5,753 L681.5,758 L691.5,763 Z" fill="#ddd"/>
<path d="M944.7,753 L954.7,758 L944.7,763 Z" fill="#ddd"/>
<text x="695.5" y="762" font-size="12" fill="#999">threshold</text>
<text x="925.7" y="762" font-size="12" fill="#ddd" stroke="#ddd" stroke-width="0.35" text-anchor="end">64</text>
<rect x="675.5" y="772" width="285.2" height="20" rx="10" fill="#222" stroke="#666" stroke-width="1"/>
<path d="M691.5,777 L681.5,782 L691.5,787 Z" fill="#ddd"/>
<path d="M944.7,777 L954.7,782 L944.7,787 Z" fill="#ddd"/>
<text x="695.5" y="786" font-size="12" fill="#999">threshold_tolerance</text>
<text x="925.7" y="786" font-size="12" fill="#ddd" stroke="#ddd" stroke-width="0.35" text-anchor="end">10</text>
<rect x="874.521875" y="647.7" width="101.578125" height="20" rx="5" fill="#101c10"/>
<text x="880.521875" y="661.7" font-size="12" fill="#fff" stroke="#fff" stroke-width="0.4">WAS Node Suite</text>
<g>
<rect x="1071" y="527" width="294.7" height="260" rx="8" fill="#353535"/>
<path d="M1071,557 V535 Q1071,527 1079,527 H1357.7 Q1365.7,527 1365.7,535 V557 Z" fill="#323232"/>
<rect x="1071" y="556.5" width="294.7" height="1" fill="#2b2b2b"/>
<circle cx="1086" cy="542" r="5" fill="#666"/>
<text x="1101" y="546.6" font-size="14" fill="#999">Image Remove Background Rembg (mtb)</text>

</g>
<rect x="1077" y="566.5" width="8" height="8" fill="#64B5F6"/>
<rect x="1351.7" y="566.5" width="8" height="8" fill="#64B5F6"/>
<rect x="1351.7" y="586.5" width="8" height="8" fill="#81C784"/>
<rect x="1351.7" y="606.5" width="8" height="8" fill="#64B5F6"/>
<rect x="1086" y="622.5" width="263.7" height="20" rx="10" fill="#222" stroke="#666" stroke-width="1"/>
<text x="1101" y="636.5" font-size="12" fill="#999">alpha_matting</text>
<circle cx="1334.7" cy="632.5" r="7.2" fill="#89A"/>
<text x="1324.7" y="636.5" font-size="12" fill="#ddd" text-anchor="end">true</text>
<rect x="1086" y="646.5" width="263.7" height="20" rx="10" fill="#222" stroke="#666" stroke-width="1"/>
<path d="M1102,651.5 L1092,656.5 L1102,661.5 Z" fill="#ddd"/>
<path d="M1333.7,651.5 L1343.7,656.5 L1333.7,661.5 Z" fill="#ddd"/>
<text x="1106" y="660.5" font-size="12" fill="#999">alpha_matting_foreground_threshold</text>
<text x="1314.7" y="660.5" font-size="12" fill="#ddd" stroke="#ddd" stroke-width="0.35" text-anchor="end">240</text>
<rect x="1086" y="670.5" width="263.7" height="20" rx="10" fill="#222" stroke="#666" stroke-width="1"/>
<path d="M1102,675.5 L1092,680.5 L1102,685.5 Z" fill="#ddd"/>
<path d="M1333.7,675.5 L1343.7,680.5 L1333.7,685.5 Z" fill="#ddd"/>
<text x="1106" y="684.5" font-size="12" fill="#999">alpha_matting_background_threshold</text>
<text x="1314.7" y="684.5" font-size="12" fill="#ddd" stroke="#ddd" stroke-width="0.35" text-anchor="end">10</text>
<rect x="1086" y="694.5" width="263.7" height="20" rx="10" fill="#222" stroke="#666" stroke-width="1"/>
<path d="M1102,699.5 L1092,704.5 L1102,709.5 Z" fill="#ddd"/>
<path d="M1333.7,699.5 L1343.7,704.5 L1333.7,709.5 Z" fill="#ddd"/>
<text x="1106" y="708.5" font-size="12" fill="#999">alpha_matting_erode_size</text>
<text x="1314.7" y="708.5" font-size="12" fill="#ddd" stroke="#ddd" stroke-width="0.35" text-anchor="end">10</text>
<rect x="1086" y="718.5" width="263.7" height="20" rx="10" fill="#222" stroke="#666" stroke-width="1"/>
<text x="1101" y="732.5" font-size="12" fill="#999">post_process_mask</text>
<circle cx="1334.7" cy="728.5" r="7.2" fill="#333"/>
<text x="1324.7" y="732.5" font-size="12" fill="#999" text-anchor="end">false</text>
<rect x="1071" y="742.5" width="294.7" height="20" fill="#000"/>
<text x="1218.35" y="757" font-size="14" fill="#fff" text-anchor="middle">bgcolor</text>
<rect x="1289.7562500000001" y="506.70000000000005" width="75.34375" height="20" rx="5" fill="#101c10"/>
<text x="1295.7562500000001" y="520.7" font-size="12" fill="#fff" stroke="#fff" stroke-width="0.4">MTB Nodes</text>
<g>
<rect x="1429.2" y="290.2" width="487.2" height="582.8" rx="8" fill="#353535"/>
<path d="M1429.2,320.2 V298.2 Q1429.2,290.2 1437.2,290.2 H1908.4 Q1916.4,290.2 1916.4,298.2 V320.2 Z" fill="#323232"/>
<rect x="1429.2" y="319.7" width="487.2" height="1" fill="#2b2b2b"/>
<circle cx="1444.2" cy="305.2" r="5" fill="#666"/>
<text x="1459.2" y="309.8" font-size="14" fill="#999">Preview Image</text>

</g>
<rect x="1435.2" y="330.2" width="8" height="8" fill="#64B5F6"/>
<use href="#blobimg" x="1429.3" y="480.5" width="487" height="260"/>
<use href="#yes" x="1622" y="531" width="162" height="162" stroke="#222"/>
<rect x="1887.8000000000002" y="269.9" width="28" height="20" rx="5" fill="#101c10"/>
<use href="#fox" x="1894.8000000000002" y="273.9"/>
<ellipse cx="907.4" cy="293.2" rx="1" ry="1.6" fill="#9a9"/>
<ellipse cx="687.6" cy="376.4" rx="1.2" ry="1.6" fill="#9a9"/>
<ellipse cx="135.6" cy="650.8" rx="1" ry="1.8" fill="#64B5F6"/>
</svg></body></html>
